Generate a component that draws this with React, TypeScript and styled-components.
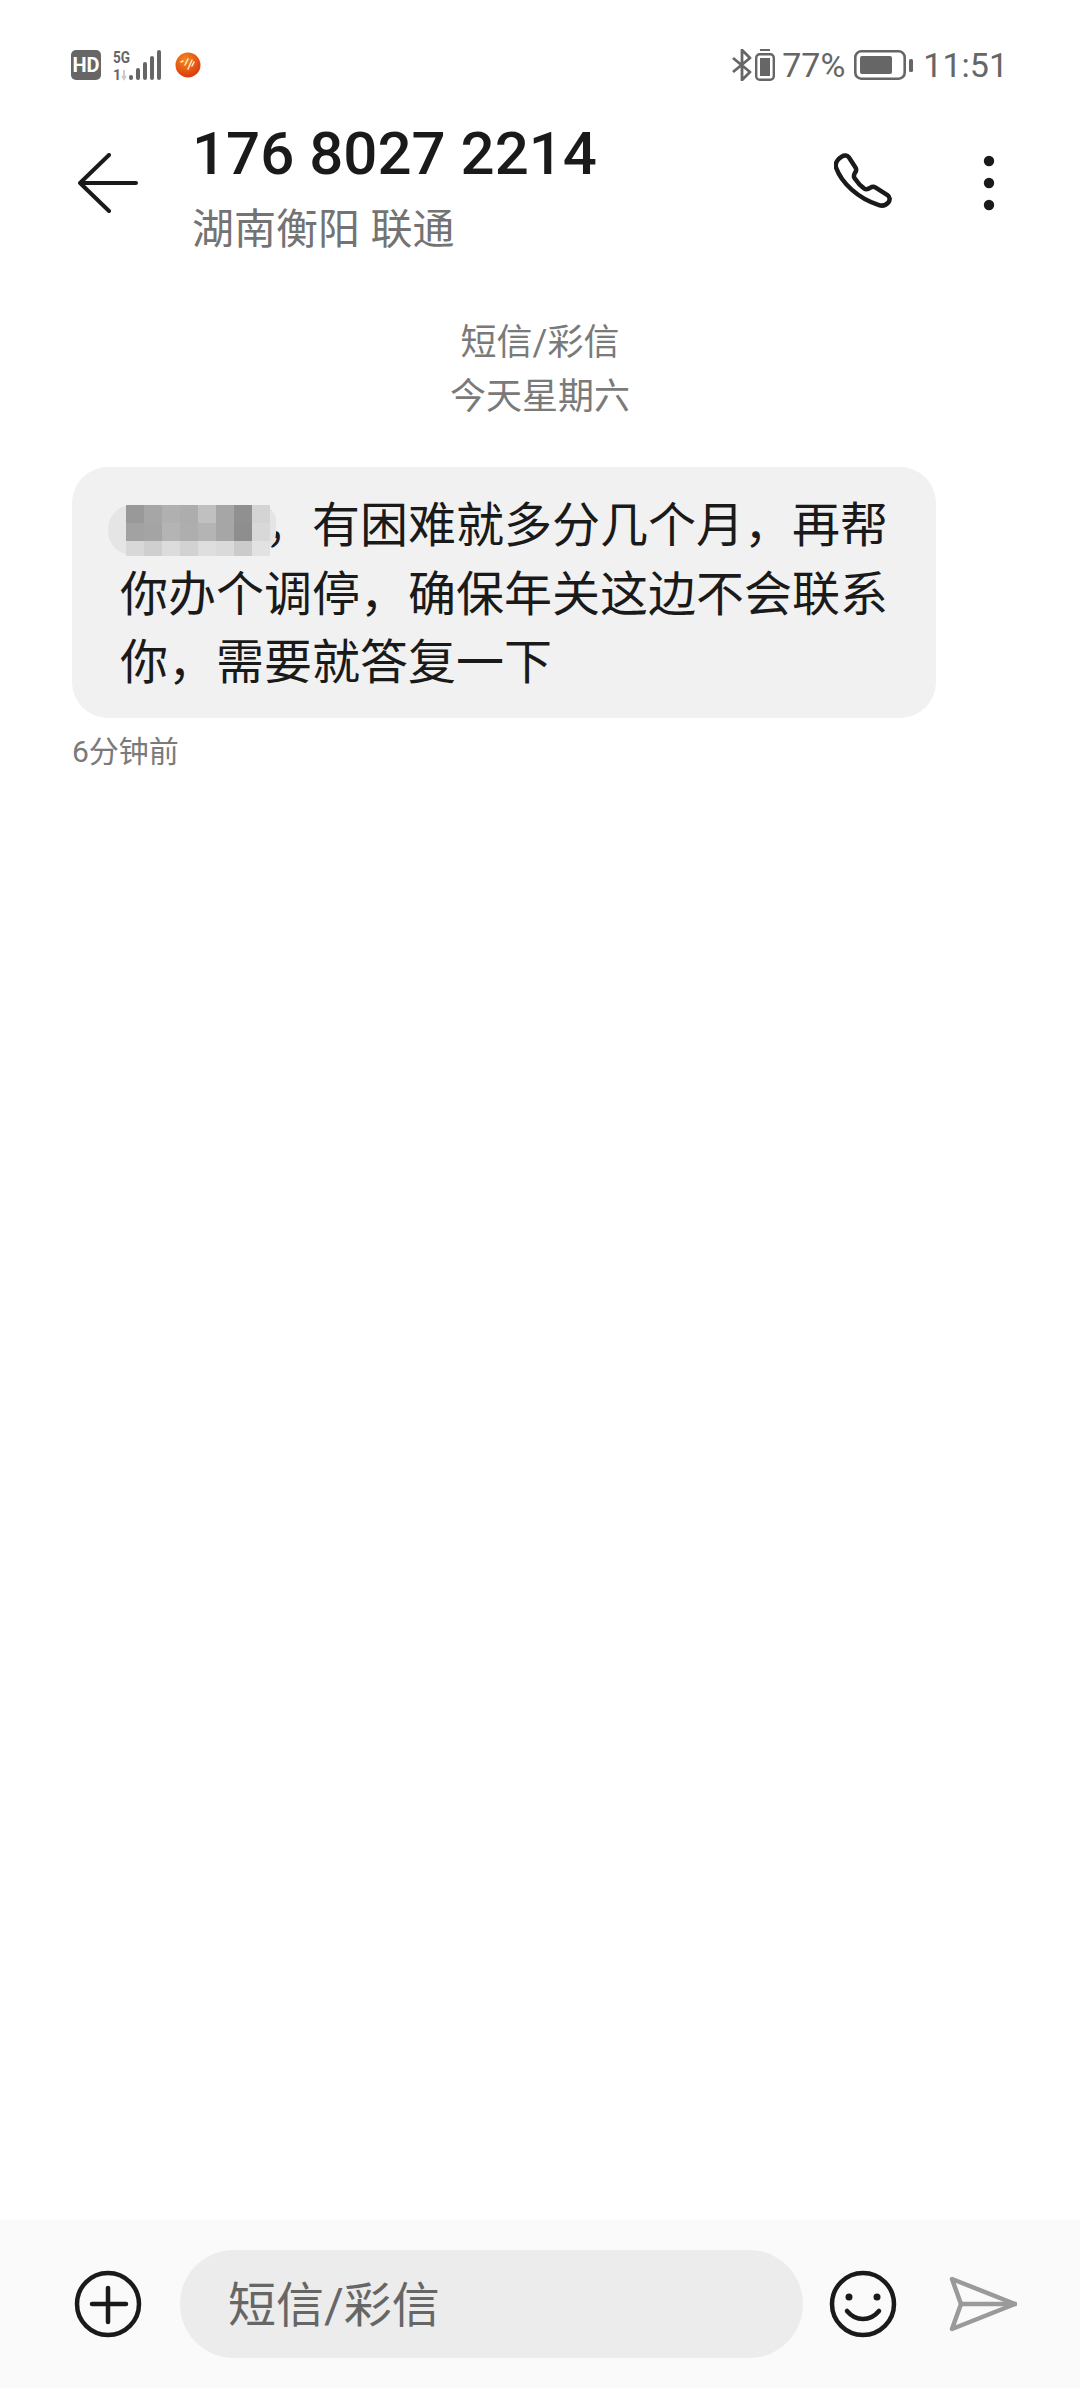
import styled, { createGlobalStyle } from 'styled-components';

const GlobalStyle = createGlobalStyle`
  html, body {
    margin: 0;
    padding: 0;
    background: #fff;
  }
  * {
    box-sizing: border-box;
  }
`;

const fontStack = `Roboto, 'Noto Sans CJK SC', sans-serif`;

const Page = styled.div`
  display: flex;
  flex-direction: column;
  width: 1080px;
  height: 2388px;
  overflow: hidden;
  background: #fff;
  font-family: ${fontStack};
`;

const StatusBar = styled.div`
  display: flex;
  justify-content: space-between;
  align-items: center;
  height: 30px;
  margin-top: 50px;
  padding: 0 72px 0 71px;
  color: #666;
`;

const StatusGroup = styled.div`
  display: flex;
  align-items: center;
`;

const StatusText = styled.span`
  font-size: 34px;
  line-height: 30px;
  margin-left: ${({ $left }: { $left: number }) => $left}px;
`;

const StatusIcon = styled.svg`
  display: block;
  flex: none;
  margin-left: ${({ $left = 0 }: { $left?: number }) => $left}px;
`;

const Header = styled.header`
  display: flex;
  align-items: flex-start;
  margin-top: 40px;
  padding: 0 85px 0 78px;
`;

const IconButton = styled.button`
  display: block;
  flex: none;
  padding: 0;
  border: 0;
  background: none;
  margin-top: ${({ $top = 0 }: { $top?: number }) => $top}px;
  margin-left: ${({ $left = 0 }: { $left?: number }) => $left}px;
  svg {
    display: block;
  }
`;

const Contact = styled.div`
  flex: 1;
  margin-left: 54px;
`;

const Number = styled.h1`
  margin: 0;
  font-size: 60px;
  line-height: 68px;
  font-weight: 500;
  color: #1a1a1a;
`;

const Location = styled.div`
  margin-top: 14px;
  font-size: 42px;
  line-height: 56px;
  color: #737373;
`;

const DateBlock = styled.div`
  margin-top: 58px;
  text-align: center;
  font-size: 36px;
  line-height: 54px;
  color: #7a7a7a;
`;

const Bubble = styled.div`
  width: 864px;
  margin: 43px 0 0 72px;
  padding: 25px 40px 20px 48px;
  border-radius: 36px;
  background: #f1f1f1;
  font-size: 48px;
  line-height: 68.5px;
  color: #1a1a1a;
`;

const Masked = styled.span`
  position: relative;
  display: inline-block;
  width: 144px;
  height: 48px;
  vertical-align: top;
`;

const MaskBlob = styled.span`
  position: absolute;
  left: -12px;
  top: 13px;
  width: 168px;
  height: 50px;
  border-radius: 24px 16px 22px 24px;
  background: #e5e5e5;
`;

const MaskGrid = styled.span`
  position: absolute;
  left: 6px;
  top: 13px;
  display: grid;
  grid-template-columns: repeat(8, 18px);
  grid-template-rows: 18px 18px 15px;
`;

const MaskCell = styled.span<{ $tone: string }>`
  background: ${({ $tone }) => $tone};
`;

const Timestamp = styled.div`
  margin: 14px 0 0 72px;
  font-size: 30px;
  line-height: 40px;
  color: #7a7a7a;
`;

const Spacer = styled.div`
  flex: 1;
`;

const Composer = styled.footer`
  display: flex;
  align-items: center;
  height: 168px;
  padding: 0 62px 0 74px;
  background: #fafafa;
`;

const Field = styled.div`
  flex: none;
  width: 623px;
  height: 108px;
  margin: 0 0 0 38px;
  padding: 3px 0 0 48px;
  border-radius: 54px;
  background: #ececec;
  font-size: 48px;
  line-height: 105px;
  color: #666;
`;

const maskTones = [
  '#999', '#a6a6a6', '#b0b0b0', '#adadad', '#c0c0c0', '#a6a6a6', '#909090', '#d4d4d4',
  '#a2a2a2', '#a4a4a4', '#b4b4b4', '#aeaeae', '#b4b4b4', '#a6a6a6', '#8e8e8e', '#d8d8d8',
  '#d8d8d8', '#cfcfcf', '#dcdcdc', '#d2d2d2', '#dedede', '#dadada', '#cbcbcb', '#e2e2e2',
];

const App = () => (
  <>
    <GlobalStyle />
    <Page>
      <StatusBar>
        <StatusGroup>
          <StatusIcon width="30" height="30" viewBox="0 0 30 30">
            <rect width="30" height="30" y="0" rx="5" fill="#666" />
            <text x="15" y="22" textAnchor="middle" fontSize="20" fontWeight="700" fontFamily="Roboto, sans-serif" fill="#fff">HD</text>
          </StatusIcon>
          <StatusIcon $left={11} width="50" height="44" viewBox="0 -7 50 44">
            <text x="1" y="13" fontSize="17" fontWeight="700" fontFamily="Roboto, sans-serif" fill="#666" textLength="17" lengthAdjust="spacingAndGlyphs">5G</text>
            <text x="1" y="30" fontSize="14" fontWeight="700" fontFamily="Roboto, sans-serif" fill="#666">1</text>
            <path d="M12 20v9M10 26l2 3 2-3" stroke="#ccc" strokeWidth="2" fill="none" />
            <rect x="17" y="25" width="4" height="5" rx="2" fill="#666" />
            <rect x="24" y="18" width="4" height="12" rx="2" fill="#666" />
            <rect x="31" y="12" width="4" height="18" rx="2" fill="#666" />
            <rect x="38" y="6" width="4" height="24" rx="2" fill="#666" />
            <rect x="45" y="0" width="4" height="30" rx="2" fill="#666" />
          </StatusIcon>
          <StatusIcon $left={13} width="26" height="26" viewBox="0 0 26 26">
            <defs>
              <radialGradient id="appDot" cx="0.4" cy="0.3" r="0.8">
                <stop offset="0" stopColor="#f28a1e" />
                <stop offset="1" stopColor="#d92f0c" />
              </radialGradient>
            </defs>
            <circle cx="13" cy="13" r="12.5" fill="url(#appDot)" />
            <path d="M6 10l2-1M10 13l3-6M13 17l4-9M17 14l2-4" stroke="#ffe3c4" strokeWidth="1.6" strokeLinecap="round" />
          </StatusIcon>
        </StatusGroup>
        <StatusGroup>
          <StatusIcon width="20" height="32" viewBox="0 0 20 32">
            <path d="M1 9l17 14-8 8V1l8 8L1 23" fill="none" stroke="#666" strokeWidth="2.8" strokeLinejoin="round" />
          </StatusIcon>
          <StatusIcon $left={3} width="20" height="32" viewBox="0 0 20 32">
            <path d="M5 1h10" stroke="#666" strokeWidth="2" />
            <rect x="1.2" y="5.2" width="17.6" height="25.6" rx="3.5" fill="none" stroke="#666" strokeWidth="2.4" />
            <rect x="5" y="9" width="10" height="18" fill="#666" />
          </StatusIcon>
          <StatusText $left={7}>77%</StatusText>
          <StatusIcon $left={9} width="60" height="32" viewBox="0 0 60 32">
            <rect x="1.3" y="2.3" width="49.4" height="27.4" rx="6" fill="none" stroke="#666" strokeWidth="2.6" />
            <rect x="6" y="7" width="32" height="18" rx="2" fill="#666" />
            <rect x="55" y="10" width="4" height="13" rx="1.5" fill="#666" />
          </StatusIcon>
          <StatusText $left={9}>11:51</StatusText>
        </StatusGroup>
      </StatusBar>

      <Header>
        <IconButton $top={33}>
          <svg width="60" height="60" viewBox="0 0 60 60" fill="none" stroke="#1a1a1a" strokeWidth="4" strokeLinecap="round" strokeLinejoin="round">
            <path d="M31 2L2 30l29 28M2 30h56" />
          </svg>
        </IconButton>
        <Contact>
          <Number>176 8027 2214</Number>
          <Location>湖南衡阳 联通</Location>
        </Contact>
        <IconButton $top={33}>
          <svg width="62" height="62" viewBox="0 0 62 62" fill="none" stroke="#1a1a1a" strokeWidth="4.5" strokeLinecap="round" strokeLinejoin="round">
            <path d="M8 3.5c2.500-1.800 5.500-1.200 7 1l6.500 10c1 1.700.8 3.400-.2 4.900-1.300 1.700-2.300 3.500-.5 6.200 2 3.100 6 7.600 9.500 10 2.400 1.500 4.400.3 6.200-.9 1.700-1.200 3.500-1.100 5.200 0l11.800 7.400c2.500 1.700 2.800 5 .8 7.300-2.200 2.500-5.500 4-9.300 2.700C24 45.500 7.500 30 2 14.500.7 9.500 4.500 5.500 8 3.500z" />
          </svg>
        </IconButton>
        <IconButton $top={35} $left={87}>
          <svg width="12" height="58" viewBox="0 0 12 58" fill="#1a1a1a">
            <circle cx="6" cy="6" r="5.2" />
            <circle cx="6" cy="28" r="5.2" />
            <circle cx="6" cy="50" r="5.2" />
          </svg>
        </IconButton>
      </Header>

      <DateBlock>
        <div>短信/彩信</div>
        <div>今天星期六</div>
      </DateBlock>

      <Bubble>
        <Masked>
          <MaskBlob />
          <MaskGrid>
            {maskTones.map((tone, i) => (
              <MaskCell key={i} $tone={tone} />
            ))}
          </MaskGrid>
        </Masked>
        ，有困难就多分几个月，再帮你办个调停，确保年关这边不会联系你，需要就答复一下
      </Bubble>
      <Timestamp>6分钟前</Timestamp>

      <Spacer />

      <Composer>
        <IconButton>
          <svg width="68" height="68" viewBox="0 0 68 68" fill="none" stroke="#1a1a1a" strokeWidth="4.5" strokeLinecap="round">
            <circle cx="34" cy="34" r="31" />
            <path d="M34 18v34M18 34h34" />
          </svg>
        </IconButton>
        <Field>短信/彩信</Field>
        <IconButton $left={26}>
          <svg width="68" height="68" viewBox="0 0 68 68" fill="none" stroke="#1a1a1a" strokeWidth="4.5" strokeLinecap="round">
            <circle cx="34" cy="34" r="31" />
            <circle cx="20" cy="27" r="3.500" fill="#1a1a1a" stroke="none" />
            <circle cx="48" cy="27" r="3.500" fill="#1a1a1a" stroke="none" />
            <path d="M18 41c5 6 10 8 16 8s11-2 16-8" />
          </svg>
        </IconButton>
        <IconButton $left={52}>
          <svg width="68" height="56" viewBox="0 0 68 56" fill="none" stroke="#9a9a9a" strokeWidth="4.500" strokeLinecap="round" strokeLinejoin="round">
            <path d="M3 3l63 25L3 53l9-25z" />
            <path d="M12 28h54" />
          </svg>
        </IconButton>
      </Composer>
    </Page>
  </>
);

export default App;
